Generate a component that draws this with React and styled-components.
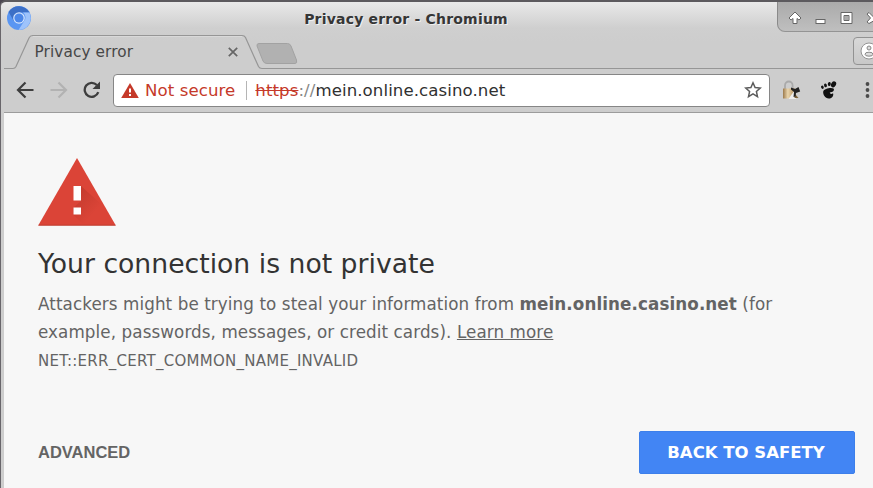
import styled, { createGlobalStyle } from "styled-components";

const App = () => {
  return (
    <Window>
      <GlobalStyle />
      <TitleBar>
        <ChromiumLogo />
        <WindowTitle>Privacy error - Chromium</WindowTitle>
        <WindowControls />
      </TitleBar>
      <TabStrip>
        <TabOutline />
        <Tab>
          <TabTitle>Privacy error</TabTitle>
          <CloseIcon />
        </Tab>
        <NewTabIcon />
        <ProfileButton>
          <ProfileIcon />
        </ProfileButton>
      </TabStrip>
      <Toolbar>
        <Navigation>
          <BackIcon />
          <ForwardIcon />
          <ReloadIcon />
        </Navigation>
        <AddressBar>
          <SecurityIcon />
          <NotSecure>Not secure</NotSecure>
          <Divider />
          <Url>
            <Scheme>https</Scheme>
            <Slashes>://</Slashes>
            mein.online.casino.net
          </Url>
          <StarIcon />
        </AddressBar>
        <Extensions>
          <LockIcon />
          <FootIcon />
          <MenuIcon />
        </Extensions>
      </Toolbar>
      <Page>
        <WarningIcon />
        <Heading>Your connection is not private</Heading>
        <Message>
          Attackers might be trying to steal your information from{" "}
          <strong>mein.online.casino.net</strong> (for
          <br />
          example, passwords, messages, or credit cards).{" "}
          <LearnMore>Learn more</LearnMore>
        </Message>
        <ErrorCode>NET::ERR_CERT_COMMON_NAME_INVALID</ErrorCode>
        <Actions>
          <Advanced>ADVANCED</Advanced>
          <SafetyButton>BACK TO SAFETY</SafetyButton>
        </Actions>
      </Page>
    </Window>
  );
};

export default App;

const ChromiumLogo = () => (
  <Icon width="26" height="26" viewBox="0 0 26 26">
    <circle cx="13" cy="13" r="12" fill="#5a96f2" />
    <path d="M2.6 7 A12 12 0 0 1 23.4 7.5 H13 L7.8 16Z" fill="#3c6fc6" />
    <path d="M23.4 7.5 A12 12 0 0 1 12.5 25 L18.2 16 A6 6 0 0 0 17 7.5Z" fill="#9ec3fb" />
    <circle cx="13" cy="13" r="5.8" fill="#d6e5fc" />
    <circle cx="13" cy="13" r="4.6" fill="#4c87e8" />
  </Icon>
);

const WindowControls = () => (
  <Controls>
    <svg width="96" height="30" viewBox="1.5 0 96 30">
      <g fill="#fff" stroke="#666" strokeWidth="1">
        <path d="M18.5 10 L24.5 16 L22.5 18 L20.5 16.5 V21.5 H16.5 V16.5 L14.5 18 L12.5 16Z" />
        <rect x="39.5" y="17.5" width="9" height="4" />
        <path
          fillRule="evenodd"
          d="M64.5 10.5 H75.5 V21.5 H64.5Z M67.5 13.5 V18.5 H72.5 V13.5Z"
        />
        <path d="M90.5 12 L92.5 10.5 L97 15 L99 17 L97 19 L92.5 21.5 L90.5 20 L94 16Z" />
      </g>
      <rect x="68" y="14" width="4" height="4" fill="#aaa" />
    </svg>
  </Controls>
);

const CloseIcon = () => (
  <Icon width="10" height="10" viewBox="0 0 10 10">
    <path d="M0.8 0.8 L9.2 9.2 M9.2 0.8 L0.8 9.2" stroke="#666" strokeWidth="1.7" />
  </Icon>
);

const NewTabIcon = () => (
  <NewTab width="42" height="21" viewBox="0 0 42 21">
    <path
      d="M3 0.5 H31.5 Q34 0.5 35 3 L40.5 17 Q41.5 20.5 39 20.5 H11 Q8 20.5 7 18 L1 3 Q0.5 0.5 3 0.5Z"
      fill="#b1b1b1"
      stroke="#a2a2a2"
    />
  </NewTab>
);

const TabOutline = () => (
  <Outline width="869" height="36" viewBox="0 0 869 36">
    <path
      d="M0 34.5 H9 Q11 34.5 12 32.5 L25 4 Q26.2 1.5 28.5 1.5 H238 Q240.5 1.5 241.5 3.5 L254.5 32.5 Q255.5 34.5 258 34.5 H869"
      fill="none"
      stroke="#969696"
      strokeWidth="1.2"
    />
    <path d="M29 2.5 H238" stroke="#d9d9d9" />
  </Outline>
);

const ProfileIcon = () => (
  <Icon width="18" height="18" viewBox="0 0 18 18">
    <circle cx="9" cy="9" r="8" fill="#fff" stroke="#949494" />
    <circle cx="9" cy="6" r="2" fill="#ddd" stroke="#888" />
    <ellipse cx="9" cy="12.2" rx="4" ry="2" fill="#ddd" stroke="#888" />
  </Icon>
);

const BackIcon = () => (
  <Icon width="18" height="18" viewBox="0 0 18 18">
    <path d="M17.5 9 H2 M9.5 1.5 L2 9 L9.5 16.5" fill="none" stroke="#3e3e3e" strokeWidth="2.2" />
  </Icon>
);

const ForwardIcon = () => (
  <Icon width="18" height="18" viewBox="0 0 18 18">
    <path d="M0.5 9 H16 M8.5 1.5 L16 9 L8.5 16.5" fill="none" stroke="#b2b2b2" strokeWidth="2.2" />
  </Icon>
);

const ReloadIcon = () => (
  <Icon width="18" height="18" viewBox="0 0 18 18">
    <path d="M15.3 11.2 A7 7 0 1 1 13.8 4" fill="none" stroke="#3e3e3e" strokeWidth="2.3" />
    <path d="M17 0.5 V8 H9.5Z" fill="#3e3e3e" />
  </Icon>
);

const SecurityIcon = () => (
  <Icon width="18" height="15" viewBox="0 0 18 15">
    <path d="M9 0 L17.8 15 H0.2Z" fill="#c53929" />
    <path d="M8 5.5 H10 V9.5 H8Z M8 11 H10 V13 H8Z" fill="#fff" />
  </Icon>
);

const StarIcon = () => (
  <Icon width="18" height="18" viewBox="0 0 18 18">
    <path
      d="M9 1.8 L11.1 6.5 L16.3 7 L12.4 10.5 L13.5 15.6 L9 12.9 L4.5 15.6 L5.6 10.5 L1.7 7 L6.9 6.5Z"
      fill="none"
      stroke="#5c5c5c"
      strokeWidth="1.5"
    />
  </Icon>
);

const LockIcon = () => (
  <Icon width="19" height="20" viewBox="0 0 19 20">
    <defs>
      <linearGradient id="brass">
        <stop offset="0" stopColor="#9c7a4c" />
        <stop offset="0.4" stopColor="#ead5ac" />
        <stop offset="1" stopColor="#b18d5a" />
      </linearGradient>
    </defs>
    <path d="M3 9 V5.5 A3.8 4 0 0 1 10.6 5.5 V9" fill="none" stroke="#aaa" strokeWidth="1.8" />
    <rect x="1" y="8.5" width="12" height="10" fill="url(#brass)" />
    <path d="M6.5 19 L12 11 L14 19Z" fill="#eee" />
    <path d="M13 14 L16.5 18 H12.5Z" fill="#7d6238" />
    <path d="M9 7.5 L13 9 L16.5 7 L18.2 11.5 L14 13 L13.5 16.5 L11.5 17 L12 12 L9 9.5Z" fill="#222" />
  </Icon>
);

const FootIcon = () => (
  <Icon width="17" height="18" viewBox="0 0 17 18">
    <g fill="#111">
      <ellipse cx="13.6" cy="3.3" rx="2.4" ry="3.2" transform="rotate(25 13.6 3.3)" />
      <ellipse cx="9.3" cy="3" rx="1.5" ry="2.1" transform="rotate(10 9.3 3)" />
      <ellipse cx="5.5" cy="4.3" rx="1.4" ry="1.9" transform="rotate(-15 5.5 4.3)" />
      <ellipse cx="2.4" cy="6.3" rx="1.3" ry="1.7" transform="rotate(-25 2.4 6.3)" />
      <path d="M13.5 7.5 C15 9.5 12.5 11.3 9.8 11.5 C9.8 13 11.5 13.5 13 12.3 C14 14.5 12 17.7 8.8 17.6 C5 17.4 2.8 13.5 3.2 10.5 C3.8 7.5 11.5 6 13.5 7.5Z" />
    </g>
  </Icon>
);

const MenuIcon = () => (
  <Icon width="5" height="18" viewBox="0 0 5 18">
    <g fill="#4a4a4a">
      <circle cx="2.5" cy="3" r="1.9" />
      <circle cx="2.5" cy="9" r="1.9" />
      <circle cx="2.5" cy="15" r="1.9" />
    </g>
  </Icon>
);

const WarningIcon = () => (
  <Warning width="78" height="68" viewBox="0 0 78 68">
    <defs>
      <linearGradient id="shade" x1="0" y1="0" x2="1" y2="1">
        <stop offset="0.15" stopColor="#b53629" />
        <stop offset="0.65" stopColor="#db4437" />
      </linearGradient>
    </defs>
    <path d="M39 0 L77.8 67.5 H0.2Z" fill="#db4437" />
    <path d="M43 28 L62 45 L70 60 V66.5 H45 L35 56.5 V50 L43 43Z" fill="url(#shade)" opacity="0.6" />
    <path d="M0.5 67.2 H77.5" stroke="#b83b30" strokeWidth="0.8" />
    <path d="M35.5 28 H43 V42.5 H35.5Z M35.5 49.5 H43 V56.5 H35.5Z" fill="#fff" />
  </Warning>
);

const GlobalStyle = createGlobalStyle`
  body {
    margin: 0;
    overflow: hidden;
    background: #4b4650;
    font-family: "DejaVu Sans", sans-serif;
  }

  * {
    box-sizing: border-box;
  }
`;

const Icon = styled.svg`
  display: block;
  flex-shrink: 0;
`;

const Window = styled.div`
  display: flex;
  flex-direction: column;
  width: 873px;
  height: 488px;
  overflow: hidden;
  background: linear-gradient(#e9e9e9, #cfcfcf 26px, #cdcdcd 40px);
  border-top: 2px solid #5c5a5e;
  border-left: 1px solid #68656a;
  border-top-left-radius: 6px;
  padding-left: 3px;
`;

const TitleBar = styled.header`
  display: grid;
  grid-template-columns: 26px 1fr 96px;
  height: 32px;
  padding-left: 2px;

  > svg {
    margin-top: 3px;
  }
`;

const WindowTitle = styled.div`
  justify-self: center;
  margin-left: 3px;
  font-size: 14px;
  font-weight: bold;
  letter-spacing: 0.2px;
  line-height: 34px;
  color: #363636;
  text-shadow: 1px 1px 0 #f0f0f0;
`;

const Controls = styled.div`
  height: 30px;
  border-left: 1px solid #8a8a8a;
  border-bottom: 1px solid #949494;
  border-bottom-left-radius: 8px;
  background: linear-gradient(#aaa, #bfbfbf);
  overflow: hidden;
`;

const TabStrip = styled.div`
  position: relative;
  display: flex;
  height: 36px;
`;

const Outline = styled.svg`
  position: absolute;
  top: 0;
  left: 0;
`;

const Tab = styled.div`
  display: flex;
  align-items: center;
  justify-content: space-between;
  width: 252px;
  padding: 0 18px 1px 30.5px;
`;

const TabTitle = styled.span`
  font-size: 15.3px;
  letter-spacing: 0.1px;
  color: #474747;
`;

const NewTab = styled(Icon)`
  margin-top: 9px;
`;

const ProfileButton = styled.div`
  width: 42px;
  height: 28px;
  margin: 3px -22px 0 auto;
  padding: 4px 6px;
  border: 1px solid #929292;
  border-radius: 4px;
  background: linear-gradient(#d8d8d8, #c8c8c8);
`;

const Toolbar = styled.nav`
  display: flex;
  align-items: center;
  height: 43px;
  padding: 0 0 2px 12px;
  border-bottom: 1px solid #9c9c9c;
`;

const Navigation = styled.div`
  display: flex;
  gap: 15.5px;
`;

const Extensions = styled.div`
  display: flex;
  align-items: center;

  > svg + svg {
    margin-left: 19px;
  }

  > svg:last-child {
    margin-left: 28px;
  }
`;

const AddressBar = styled.div`
  display: flex;
  align-items: center;
  width: 657px;
  height: 33px;
  margin: 0 12px;
  padding: 0 7px;
  border: 1px solid #868686;
  border-radius: 4px;
  background: #fff;
  font-size: 16.6px;
  letter-spacing: 0.08px;
  flex-shrink: 0;
`;

const NotSecure = styled.span`
  margin-left: 6px;
  color: #c53929;
`;

const Divider = styled.span`
  width: 1px;
  height: 19px;
  margin: 0 8px 0 11px;
  background: #b5b5b5;
`;

const Url = styled.span`
  flex: 1;
  color: #303030;
`;

const Scheme = styled.span`
  color: #c53929;
  text-decoration: line-through;
`;

const Slashes = styled.span`
  color: #888;
`;

const Page = styled.main`
  flex: 1;
  padding: 45px 18px 0 34px;
  background: #f7f7f7;
  color: #646464;
`;

const Warning = styled(Icon)`
  margin-bottom: 21px;
`;

const Heading = styled.h1`
  margin: 0 0 9px;
  font-size: 26.67px;
  font-weight: normal;
  line-height: 34px;
  color: #333;
`;

const Message = styled.p`
  margin: 0;
  font-size: 16.75px;
  letter-spacing: 0.09px;
  line-height: 28.4px;
  white-space: nowrap;
`;

const LearnMore = styled.span`
  text-decoration: underline;
`;

const ErrorCode = styled.div`
  font-size: 15px;
  letter-spacing: 0.26px;
  line-height: 28px;
`;

const Actions = styled.div`
  display: flex;
  align-items: center;
  justify-content: space-between;
  margin-top: 56.2px;
`;

const Advanced = styled.span`
  font-family: "Liberation Sans", sans-serif;
  font-size: 16.5px;
  font-weight: bold;
`;

const SafetyButton = styled.button`
  width: 216px;
  height: 43px;
  padding: 0 2px 0 0;
  border: 1px solid #3d7fea;
  border-radius: 2px;
  background: #4285f4;
  color: #fff;
  font-family: "DejaVu Sans", sans-serif;
  font-size: 16.5px;
  font-weight: bold;
`;
